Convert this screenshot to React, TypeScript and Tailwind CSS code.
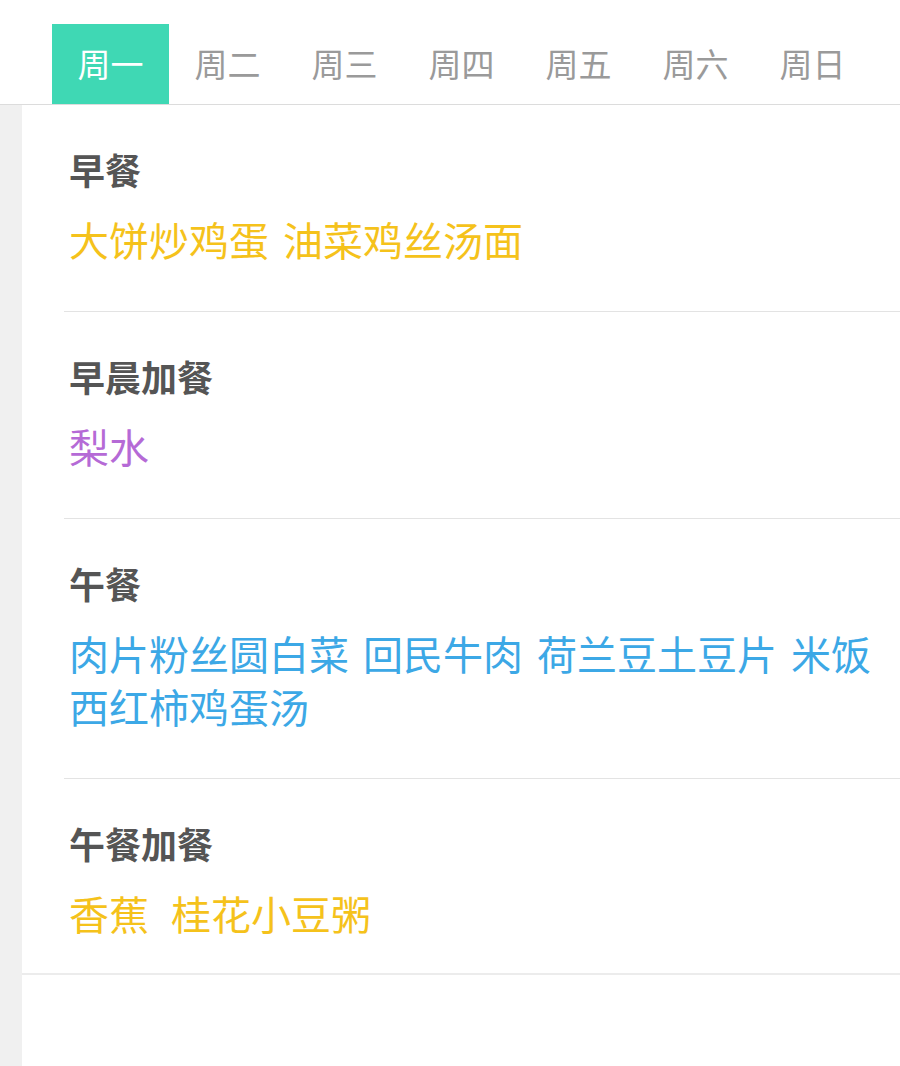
import React, { useState } from "react";

const days = ["周一", "周二", "周三", "周四", "周五", "周六", "周日"];

interface Meal {
   title: string;
   food: string;
   color: string;
}

const meals: Meal[] = [
   { title: "早餐", food: "大饼炒鸡蛋 油菜鸡丝汤面", color: "text-[#f5c21b]" },
   { title: "早晨加餐", food: "梨水", color: "text-[#b56ad6]" },
   {
      title: "午餐",
      food: "肉片粉丝圆白菜 回民牛肉 荷兰豆土豆片 米饭 西红柿鸡蛋汤",
      color: "text-[#3ca8e6]",
   },
   { title: "午餐加餐", food: "香蕉 \u2009桂花小豆粥", color: "text-[#f5c21b]" },
];

export default function App() {
   const [active, setActive] = useState(0);

   return (
      <div
         className="w-[900px] h-[1066px] bg-white flex flex-col overflow-hidden"
         style={{ fontFamily: '"Noto Sans CJK SC", "Noto Sans", sans-serif' }}
      >
         {/* Day tabs */}
         <div className="pt-[24px] border-b border-[#dcdcdc]">
            <div className="flex pl-[52px] h-[80px]">
               {days.map((d, i) => (
                  <button
                     key={d}
                     onClick={() => setActive(i)}
                     className={`w-[117px] h-full flex items-center justify-center text-[33px] pb-[1px] ${
                        active === i
                           ? "bg-[#3fd8b4] text-white"
                           : "text-[#9a9a9a]"
                     }`}
                  >
                     {d}
                  </button>
               ))}
            </div>
         </div>

         {/* Menu */}
         <div className="flex flex-1">
            <div className="w-[22px] bg-[#f0f0f0]" />
            <div className="flex-1">
               <div className="border-b-2 border-[#ececec]">
                  {meals.map((m, i) => (
                     <div
                        key={m.title}
                        className={`ml-[42px] pl-[5px] pt-[40px] ${
                           i < meals.length - 1
                              ? "pb-[45px] border-b border-[#e3e3e3]"
                              : "pb-[33px]"
                        }`}
                     >
                        <div className="text-[36px] leading-[48px] font-bold text-[#555555]">
                           {m.title}
                        </div>
                        <div
                           className={`mt-[20px] pr-[16px] text-[40px] leading-[53px] [word-spacing:5px] whitespace-pre-wrap ${m.color}`}
                        >
                           {m.food}
                        </div>
                     </div>
                  ))}
               </div>
            </div>
         </div>
      </div>
   );
}
